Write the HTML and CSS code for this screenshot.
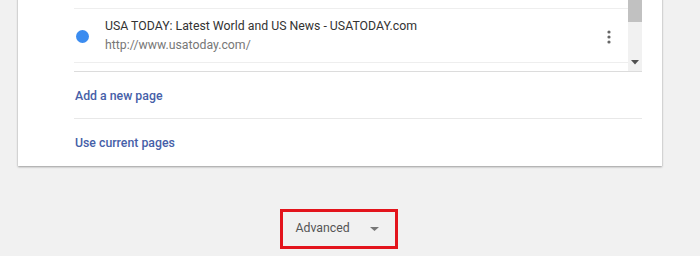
FILE: index.html
```html
<!DOCTYPE html>
<html>
<head>
<meta charset="utf-8">
<link rel="stylesheet" href="styles.css">
</head>
<body>
<div class="page">
  <div class="card">
    <div class="listbox">
      <div class="list">
        <div class="row-partial"></div>
        <div class="row">
          <span class="dot"></span>
          <div class="texts">
            <div class="title">USA TODAY: Latest World and US News - USATODAY.com</div>
            <div class="url">http://www.usatoday.com/</div>
          </div>
          <svg class="more" width="4" height="14" viewBox="0 0 4 14"><circle cx="2" cy="2" r="1.6"/><circle cx="2" cy="7" r="1.6"/><circle cx="2" cy="12" r="1.6"/></svg>
        </div>
      </div>
      <div class="scrollbar">
        <div class="thumb"></div>
        <div class="track"></div>
        <svg class="arrow" width="8" height="5" viewBox="0 0 8 5"><path d="M0 0H8L4 4.5Z"/></svg>
      </div>
    </div>
    <div class="link-row sep">Add a new page</div>
    <div class="link-row">Use current pages</div>
  </div>
  <div class="adv-wrap">
    <div class="advanced">
      <span>Advanced</span>
      <svg width="9" height="4" viewBox="0 0 9 4"><path d="M0 0H9L4.5 4Z"/></svg>
    </div>
  </div>
</div>
</body>
</html>
```
FILE: styles.css
```css
html, body {
  margin: 0;
  padding: 0;
  background: #f1f1f1;
  font-family: Roboto, "Liberation Sans", Arial, sans-serif;
}
.page {
  width: 644px;
  margin-left: 18px;
}
.card {
  background: #fff;
  margin-top: -10px;
  padding: 10px 20px 0 56px;
  box-shadow: 0 1px 2px rgba(0,0,0,0.35), 0 0 1px rgba(0,0,0,0.1);
  height: 176px;
  box-sizing: border-box;
}
.listbox {
  display: flex;
  height: 72px;
  border-bottom: 1px solid #dcdcdc;
  box-sizing: border-box;
}
.list {
  flex: 1;
  overflow: hidden;
}
.row-partial {
  height: 8px;
  border-bottom: 1px solid #eeeeee;
}
.row {
  display: flex;
  align-items: center;
  height: 53px;
  border-bottom: 1px solid #eeeeee;
}
.dot {
  width: 13px;
  height: 13px;
  border-radius: 50%;
  background: #3b8cf0;
  margin-left: 2px;
  margin-right: 16px;
  margin-top: 2px;
}
.texts {
  flex: 1;
}
.title {
  font-size: 12.3px;
  color: #333;
  line-height: 17px;
}
.url {
  font-size: 12.3px;
  color: #777;
  line-height: 17px;
  margin-top: 2px;
}
.more {
  fill: #666;
  margin-right: 17px;
  margin-top: 2px;
}
.scrollbar {
  width: 14px;
  background: #f1f1f1;
  display: flex;
  flex-direction: column;
  align-items: center;
}
.thumb {
  width: 14px;
  height: 22px;
  background: #c1c1c1;
}
.track {
  flex: 1;
}
.arrow {
  fill: #505050;
  margin-bottom: 6px;
}
.link-row {
  height: 47px;
  display: flex;
  align-items: center;
  font-size: 12.3px;
  font-weight: 500;
  color: #4660a8;
  padding-left: 1px;
}
.sep {
  border-bottom: 1px solid #e8e8e8;
  padding-top: 2px;
  box-sizing: border-box;
}
.adv-wrap {
  display: flex;
  justify-content: center;
  padding-top: 43px;
  padding-right: 3px;
}
.advanced {
  width: 118px;
  height: 40px;
  box-sizing: border-box;
  border: 3px solid #e3141c;
  display: flex;
  align-items: center;
  padding-left: 13px;
  padding-bottom: 3px;
  font-size: 12.3px;
  color: #555;
}
.advanced svg {
  fill: #777;
  margin-left: 20px;
  margin-top: 3px;
}
```
